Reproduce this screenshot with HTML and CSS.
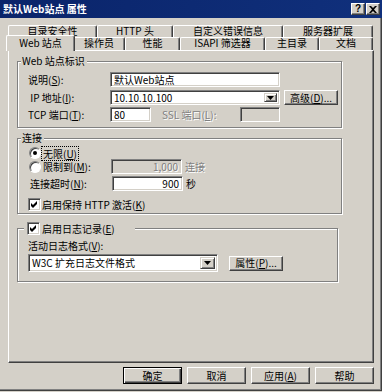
FILE: index.html
```html
<!DOCTYPE html>
<html>
<head>
<meta charset="utf-8">
<title>默认Web站点 属性</title>
<link rel="stylesheet" href="styles.css">
</head>
<body>
<div class="window">
  <div class="titlebar">
    <span class="title">默认Web站点 属性</span>
    <div class="tb-buttons">
      <span class="tb-btn help">?</span>
      <span class="tb-btn close"><svg width="8" height="7" viewBox="0 0 8 7"><path d="M0 0h2l2 2l2-2h2l-3 3.5l3 3.5h-2l-2-2l-2 2h-2l3-3.5z" fill="#000"/></svg></span>
    </div>
  </div>

  <div class="tabs">
    <div class="tabrow back">
      <div class="tab w89">目录安全性</div>
      <div class="tab w76">HTTP 头</div>
      <div class="tab w110">自定义错误信息</div>
      <div class="tab w90">服务器扩展</div>
    </div>
    <div class="tabrow front">
      <div class="tab selected">Web 站点</div>
      <div class="tab w52">操作员</div>
      <div class="tab w55">性能</div>
      <div class="tab w85">ISAPI 筛选器</div>
      <div class="tab w54">主目录</div>
      <div class="tab w54">文档</div>
    </div>
  </div>

  <div class="panel">
    <div class="group g1">
      <div class="group-title">Web 站点标识</div>
      <div class="row mt5">
        <span class="lbl w82">说明(<u>S</u>):</span>
        <div class="field w170">默认Web站点</div>
      </div>
      <div class="row mt3">
        <span class="lbl w82">&nbsp;IP 地址(<u>I</u>):</span>
        <div class="field combo w170"><span class="combo-text">10.10.10.100</span><span class="drop"><svg width="7" height="4" viewBox="0 0 7 4"><path d="M0 0h7l-3.5 4z" fill="#000"/></svg></span></div>
        <div class="btn ml4 w54">高级(<u>D</u>)...</div>
      </div>
      <div class="row mt2">
        <span class="lbl w82">TCP 端口(<u>T</u>):</span>
        <div class="field w41">80</div>
        <span class="lbl disabled ml11 w78">SSL 端口(<u>L</u>):</span>
        <div class="field off w40"></div>
      </div>
    </div>

    <div class="group g2">
      <div class="group-title">连接</div>
      <div class="row r12 mt3 ml1">
        <span class="radio on"></span>
        <span class="focus">无限(<u>U</u>)</span>
      </div>
      <div class="row ml1">
        <span class="radio"></span>
        <span class="lbl w70 pl2">限制到(<u>M</u>):</span>
        <div class="field off right w71">1,000</div>
        <span class="lbl disabled ml3">连接</span>
      </div>
      <div class="row mt2 ml2">
        <span class="lbl w82">连接超时(<u>N</u>):</span>
        <div class="field right w71">900</div>
        <span class="lbl ml3">秒</span>
      </div>
      <div class="row r13 mt7">
        <span class="check"><svg width="7" height="7" viewBox="0 0 7 7"><path d="M0 2l2 2l4-4v3l-4 4l-2-2z" fill="#000"/></svg></span>
        <span class="lbl pl1">启用保持 HTTP 激活(<u>K</u>)</span>
      </div>
    </div>

    <div class="group g3">
      <div class="group-title check-title">
        <span class="check"><svg width="7" height="7" viewBox="0 0 7 7"><path d="M0 2l2 2l4-4v3l-4 4l-2-2z" fill="#000"/></svg></span>
        <span class="pl2">启用日志记录(<u>E</u>)</span>
      </div>
      <div class="row r12 mt5">
        <span class="lbl">活动日志格式(<u>V</u>):</span>
      </div>
      <div class="row r18 mt2">
        <div class="field combo w190"><span class="combo-text">W3C 扩充日志文件格式</span><span class="drop"><svg width="7" height="4" viewBox="0 0 7 4"><path d="M0 0h7l-3.5 4z" fill="#000"/></svg></span></div>
        <div class="btn ml11 w54 h18">属性(<u>P</u>)...</div>
      </div>
    </div>
  </div>

  <div class="buttons">
    <div class="btn dlg default">确定</div>
    <div class="btn dlg">取消</div>
    <div class="btn dlg">应用(<u>A</u>)</div>
    <div class="btn dlg">帮助</div>
  </div>
</div>
</body>
</html>
```

FILE: styles.css
```css
* { box-sizing: border-box; }
html, body { margin: 0; padding: 0; }
body {
  width: 382px;
  height: 392px;
  overflow: hidden;
  background: #d4d0c8;
  font-family: "Noto Sans CJK SC", "Liberation Sans", sans-serif;
  font-size: 10px;
  line-height: 12px;
  color: #000;
}
u { text-decoration: underline; text-underline-offset: 1px; }

.window {
  width: 382px;
  height: 391px;
  background: #d4d0c8;
  box-shadow: inset -1px -1px #404040, inset -2px -2px #808080;
  display: flex;
  flex-direction: column;
}

/* title bar */
.titlebar {
  height: 18px;
  flex: none;
  display: flex;
  align-items: center;
  padding: 0 2px 0 3px;
  background: linear-gradient(to right, #0a246a, #10307c);
  color: #fff;
  font-weight: bold;
}
.title { flex: 1; }
.tb-buttons { display: flex; gap: 1px; }
.tb-btn {
  width: 14px;
  height: 12px;
  display: flex;
  align-items: center;
  justify-content: center;
  background: #d4d0c8;
  border: 1px solid;
  border-color: #fff #404040 #404040 #fff;
  box-shadow: inset -1px -1px #808080;
  color: #000;
  font-family: "Liberation Sans", sans-serif;
  font-size: 10px;
  font-weight: bold;
  line-height: 10px;
}

/* tabs */
.tabs {
  margin-top: 7px;
  padding-left: 8px;
  flex: none;
}
.tabrow { display: flex; width: 365px; }
.tabrow.back { height: 12px; }
.tabrow.front { height: 13px; align-items: flex-end; }
.tab {
  height: 100%;
  display: flex;
  align-items: flex-start;
  justify-content: center;
  border-top: 1px solid #fff;
  border-left: 1px solid #fff;
  border-right: 1px solid #404040;
  box-shadow: inset -1px 0 #808080;
  border-radius: 2px 2px 0 0;
  background: #d4d0c8;
  white-space: nowrap;
  line-height: 10px;
}
.tab.selected {
  width: 69px;
  height: 16px;
  margin: 0 -2px -1px -2px;
  position: relative;
  z-index: 1;
  padding-top: 2px;
}
.w89 { width: 89px; }
.w76 { width: 76px; }
.w110 { width: 110px; }
.w90 { width: 90px; }
.w52 { width: 52px; }
.w55 { width: 55px; }
.w85 { width: 85px; }
.w54 { width: 54px; }

/* panel */
.panel {
  margin-left: 8px;
  width: 366px;
  height: 313px;
  flex: none;
  border-top: 1px solid #fff;
  border-left: 1px solid #fff;
  border-right: 1px solid #404040;
  border-bottom: 1px solid #404040;
  box-shadow: inset -1px -1px #808080;
  padding: 0 0 0 8px;
}

.group {
  border: 1px solid #808080;
  box-shadow: inset 1px 1px #fff, 1px 1px #fff;
  padding: 0 0 0 10px;
}
.g1 { width: 325px; margin-top: 10px; padding-bottom: 5px; }
.g2 { width: 325px; margin-top: 10px; padding-bottom: 2px; }
.g3 { width: 321px; margin-top: 14px; padding-bottom: 9px; }

.group-title {
  width: fit-content;
  margin: -7px 0 0 -7px;
  padding: 0 2px 0 1px;
  height: 12px;
  background: #d4d0c8;
  white-space: nowrap;
}
.check-title {
  display: flex;
  align-items: center;
  width: 111px;
  height: 13px;
  margin-left: -4px;
  padding-left: 3px;
}

.row { display: flex; align-items: center; height: 15px; white-space: nowrap; }
.r12 { height: 12px; }
.r13 { height: 13px; }
.r18 { height: 18px; }
.mt2 { margin-top: 2px; }
.mt3 { margin-top: 3px; }
.mt5 { margin-top: 5px; }
.mt7 { margin-top: 7px; }
.ml1 { margin-left: 1px; }
.ml2 { margin-left: 2px; }
.ml3 { margin-left: 3px; }
.ml4 { margin-left: 4px; }
.ml11 { margin-left: 11px; }
.pl1 { padding-left: 1px; }
.pl2 { padding-left: 2px; }

.lbl { flex: none; }
.w82 { width: 82px; }
.w78 { width: 78px; }
.w70 { width: 70px; }
.w170 { width: 170px; }
.w190 { width: 190px; }
.w41 { width: 41px; }
.w40 { width: 40px; }
.w71 { width: 71px; }
.h18 { height: 18px; }

.disabled { color: #808080; text-shadow: 1px 1px #fff; }

.field {
  height: 15px;
  flex: none;
  background: #fff;
  border: 1px solid;
  border-color: #808080 #fff #fff #808080;
  box-shadow: inset 1px 1px #404040, inset -1px -1px #d4d0c8;
  padding: 0 3px;
  display: flex;
  align-items: center;
  overflow: hidden;
}
.field.off { background: #d4d0c8; color: #808080; text-shadow: 1px 1px #fff; }
.field.right { justify-content: flex-end; }
.r18 .field { height: 18px; }
.combo { padding: 2px 2px 2px 3px; }
.combo-text { flex: 1; }
.drop {
  width: 13px;
  height: 100%;
  flex: none;
  display: flex;
  align-items: center;
  justify-content: center;
  background: #d4d0c8;
  border: 1px solid;
  border-color: #d4d0c8 #404040 #404040 #d4d0c8;
  box-shadow: inset 1px 1px #fff, inset -1px -1px #808080;
}
.r18 .drop { width: 15px; }

.btn {
  height: 15px;
  flex: none;
  display: flex;
  align-items: center;
  justify-content: center;
  background: #d4d0c8;
  border: 1px solid;
  border-color: #fff #404040 #404040 #fff;
  box-shadow: inset -1px -1px #808080;
  white-space: nowrap;
}

.radio {
  width: 12px;
  height: 12px;
  flex: none;
  border-radius: 50%;
  background: #fff;
  border: 1px solid;
  border-color: #808080 #fff #fff #808080;
  box-shadow: inset 1px 1px #404040;
  display: flex;
  align-items: center;
  justify-content: center;
}
.radio.on::after {
  content: "";
  width: 4px;
  height: 4px;
  border-radius: 50%;
  background: #000;
}
.focus {
  margin-left: 1px;
  padding: 0 1px;
  outline: 1px dotted #000;
  height: 13px;
  line-height: 13px;
}

.check {
  width: 13px;
  height: 13px;
  flex: none;
  background: #fff;
  border: 1px solid;
  border-color: #808080 #fff #fff #808080;
  box-shadow: inset 1px 1px #404040, inset -1px -1px #d4d0c8;
  display: flex;
  align-items: center;
  justify-content: center;
}

.buttons {
  margin-top: 4px;
  padding-right: 8px;
  display: flex;
  justify-content: flex-end;
  gap: 5px;
  flex: none;
}
.btn.dlg { width: 59px; height: 17px; }
.btn.default {
  border: 1px solid #000;
  box-shadow: inset 1px 1px #fff, inset -1px -1px #404040, inset -2px -2px #808080;
}
```
